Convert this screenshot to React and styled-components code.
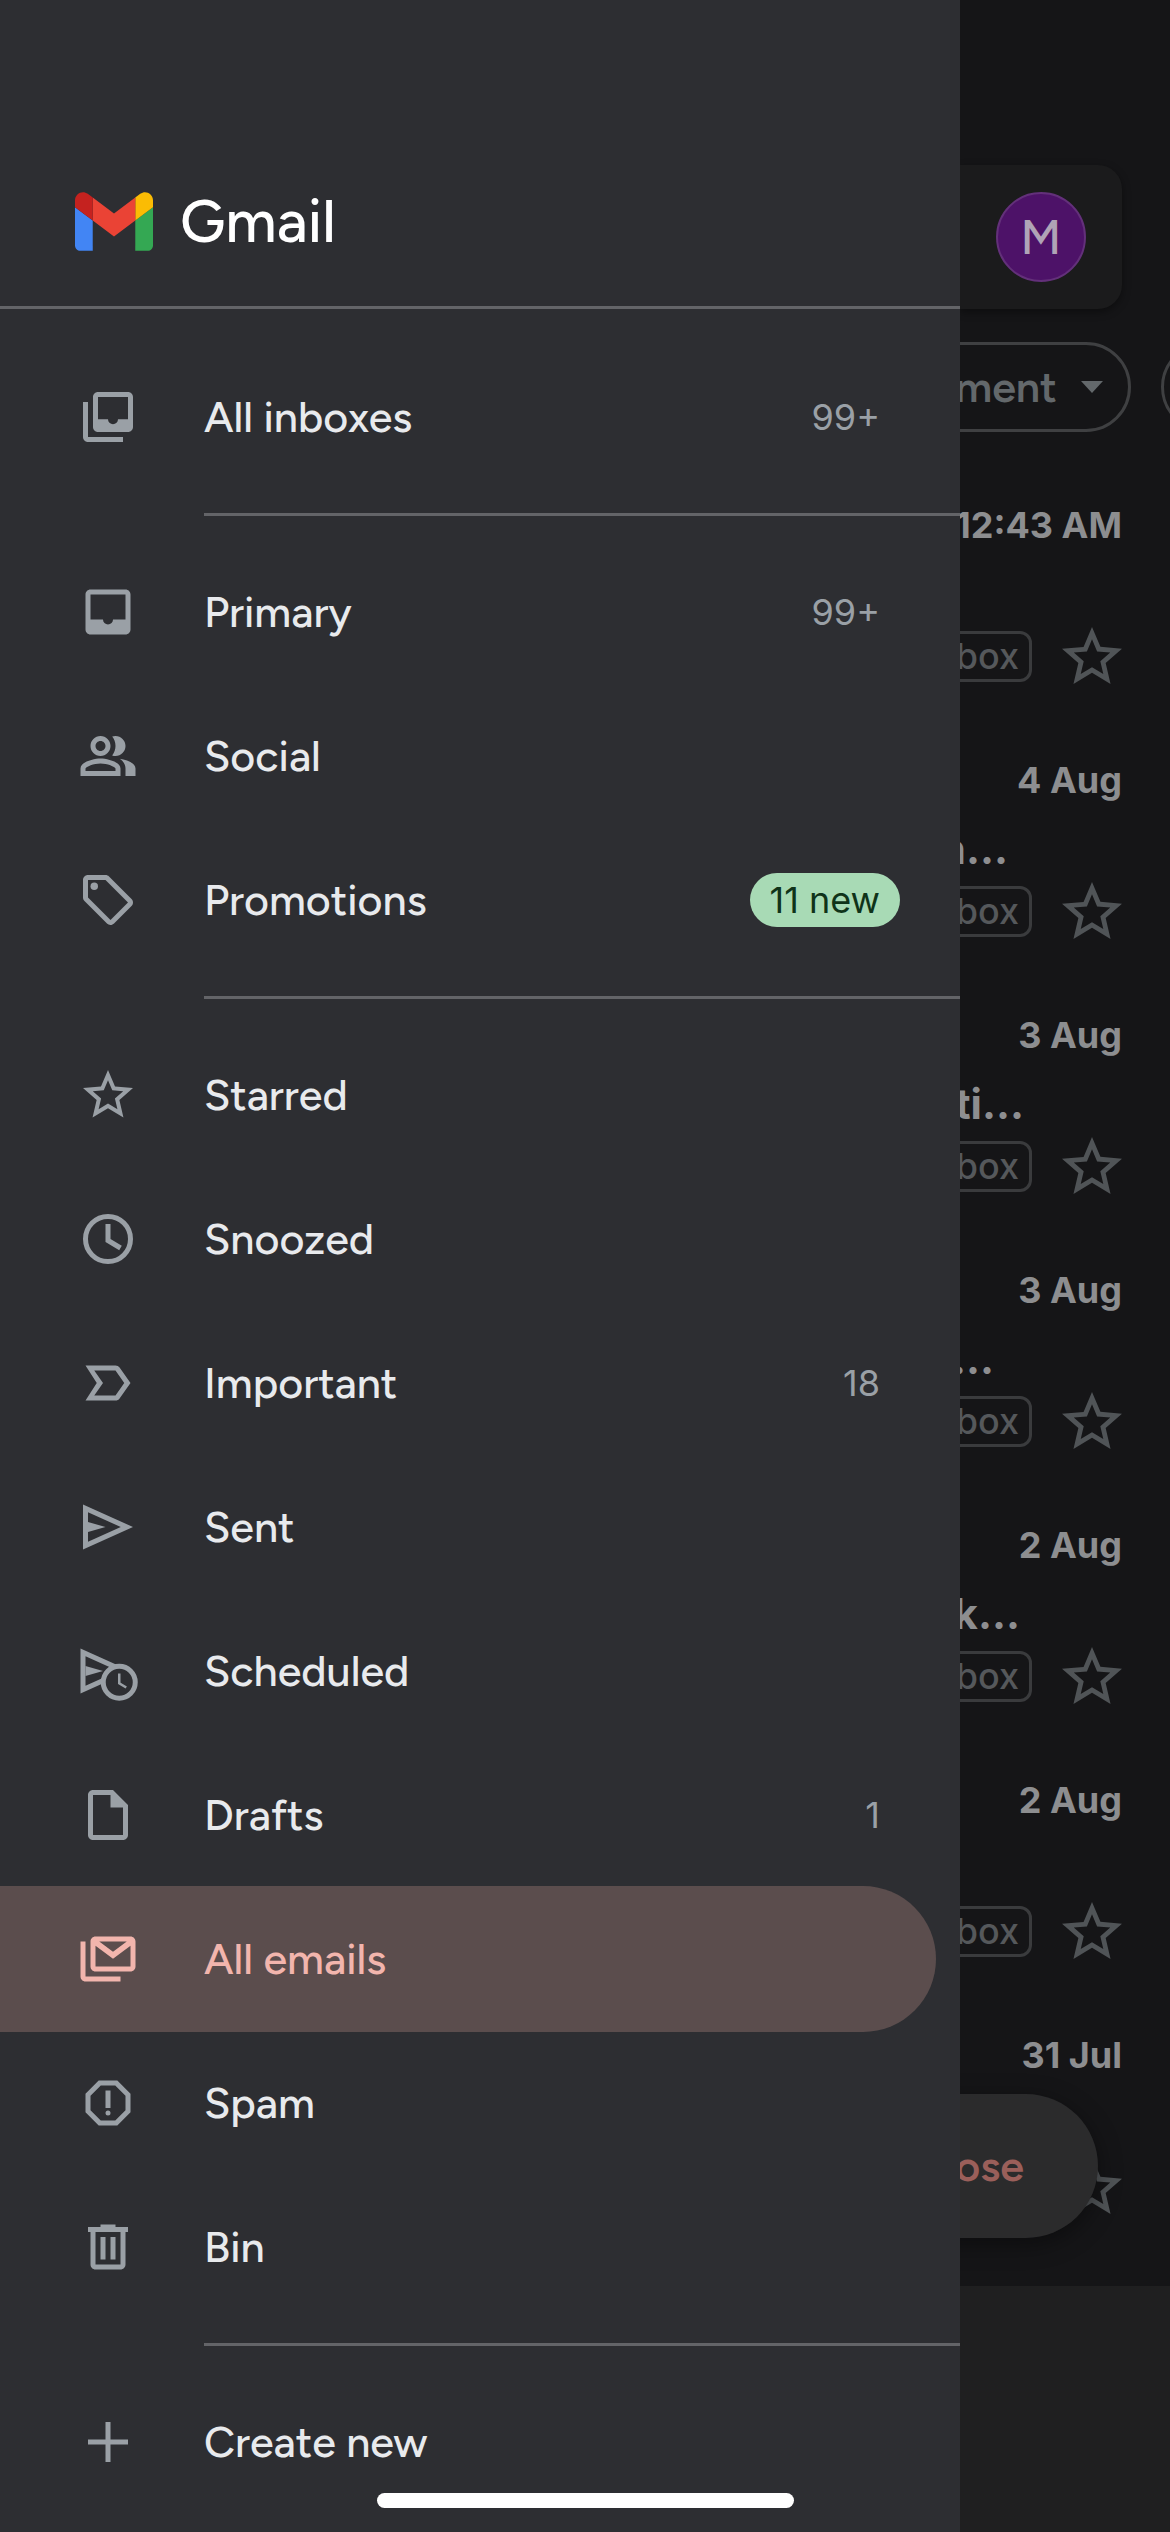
import React from "react";
import styled, { createGlobalStyle, css } from "styled-components";

const color = {
  drawer: "#2d2e32",
  line: "#636468",
  icon: "#9aa0a6",
  text: "#e8eaed",
  active: "#f2b5ad",
  activeBg: "#5b4d4d",
};

const brandFont = `Figtree, Lato, "Open Sans", sans-serif`;
const bodyFont = `Inter, Roboto, "Liberation Sans", sans-serif`;

const GlobalStyle = createGlobalStyle`
  *, *::before, *::after { box-sizing: border-box; }
  body { margin: 0; background: #151517; font-family: ${bodyFont}; }
  button { border: 0; padding: 0; background: none; font: inherit; color: inherit; }
`;

const Screen = styled.div`
  position: relative;
  display: grid;
  grid-template-columns: minmax(0, 1fr) 210px;
  min-height: 100vh;
`;

/* Drawer */

const Drawer = styled.aside`
  display: flex;
  flex-direction: column;
  background: ${color.drawer};
  color: ${color.text};
  font-family: ${brandFont};
`;

const Brand = styled.header`
  display: flex;
  align-items: center;
  gap: 27px;
  padding: 186px 75px 50px;
  border-bottom: 3px solid ${color.line};
`;

const Logo = styled.svg`
  width: 78px;
  height: 59px;
`;

const BrandName = styled.h1`
  margin: 0;
  font-size: 60px;
  line-height: 70px;
  font-weight: 500;
  color: #fff;
`;

const Nav = styled.nav`
  padding: 36px 0 18px;
`;

const Group = styled.ul`
  list-style: none;
  margin: 0;
  padding: 0;

  & + &::before {
    content: "";
    display: block;
    height: 3px;
    margin: 24px 0 24px 204px;
    background: ${color.line};
  }
`;

const Folder = styled.a`
  display: flex;
  align-items: center;
  gap: 66px;
  height: 144px;
  padding: 0 60px 0 78px;
  font-size: 43px;
  font-weight: 500;
  color: inherit;
  text-decoration: none;

  ${(p) =>
    p.$active &&
    css`
      height: 146px;
      margin: -1px 24px -1px 0;
      padding-right: 36px;
      border-radius: 0 73px 73px 0;
      background: ${color.activeBg};
      color: ${color.active};
    `}
`;

const FolderIcon = styled.svg`
  flex: none;
  width: 60px;
  height: 60px;
  fill: ${(p) => (p.$active ? color.active : color.icon)};
  stroke: none;
`;

const FolderName = styled.span`
  flex: 1;
  line-height: 54px;
`;

const Count = styled.span`
  padding: 0 20px;
  font-family: ${bodyFont};
  font-size: 36px;
  line-height: 54px;
  font-weight: 400;
  color: ${color.icon};
`;

const NewBadge = styled(Count)`
  border-radius: 28px;
  background: #a8dab5;
  color: #0f3319;
`;

/* Inbox visible beside the drawer */

const Inbox = styled.main`
  position: relative;
  display: flex;
  flex-direction: column;
  min-width: 0;
  overflow: hidden;
  padding-top: 165px;
  background: #151517;
`;

const SearchBar = styled.div`
  display: flex;
  align-items: center;
  justify-content: flex-end;
  height: 144px;
  margin-right: 48px;
  padding-right: 36px;
  border-radius: 0 24px 24px 0;
  background: #1b1b1c;
  box-shadow: 0 3px 9px rgba(0, 0, 0, 0.4);
`;

const Avatar = styled.button`
  width: 90px;
  height: 90px;
  border: 2px solid #63307a;
  border-radius: 50%;
  background: #4d1268;
  color: #b0a4b6;
  font-family: ${brandFont};
  font-size: 48px;
  line-height: 84px;
  font-weight: 500;
`;

const Filters = styled.div`
  display: flex;
  justify-content: flex-end;
  gap: 30px;
  margin: 33px -81px 69px 0;
`;

const Chip = styled.button`
  display: flex;
  flex: none;
  align-items: center;
  justify-content: flex-end;
  gap: 24px;
  width: ${(p) => p.$width}px;
  height: 90px;
  padding: 0 25px;
  border: 3px solid #3f4042;
  border-radius: 45px;
  color: #63686b;
  font-family: ${brandFont};
  font-size: 43px;
  font-weight: 600;
`;

const Caret = styled.svg`
  width: 22px;
  height: 12px;
  fill: #63686b;
`;

const Mails = styled.ul`
  flex: 1;
  list-style: none;
  margin: 0;
  padding: 0;
`;

const Mail = styled.li`
  display: flex;
  flex-direction: column;
  height: 255px;
  padding-right: 48px;
  color: #8d8e90;
  white-space: nowrap;
`;

const MailDate = styled.time`
  display: flex;
  justify-content: flex-end;
  font-size: 36px;
  line-height: 48px;
  font-weight: 700;
`;

const Subject = styled.span`
  display: flex;
  justify-content: flex-end;
  width: ${(p) => p.$width}px;
  height: 48px;
  margin-top: 21px;
  font-size: 42px;
  line-height: 48px;
  font-weight: 700;
`;

const MailFooter = styled.div`
  display: flex;
  align-items: center;
  justify-content: flex-end;
  gap: 24px;
  height: 51px;
  margin: 13px -6px 0 0;
`;

const FolderTag = styled.span`
  padding: 0 10px;
  border: 3px solid #3a3b3d;
  border-radius: 12px;
  color: #55585b;
  font-size: 36px;
  line-height: 45px;
  font-weight: 500;
`;

const StarButton = styled.button`
  display: flex;
  flex: none;
`;

const StarIcon = styled.svg`
  width: 72px;
  height: 72px;
  fill: #505457;
`;

const BottomBar = styled.footer`
  height: 246px;
  background: #1f1f20;
`;

const Compose = styled.button`
  position: absolute;
  right: 72px;
  bottom: 294px;
  height: 144px;
  padding: 0 74px 0 60px;
  border-radius: 72px;
  background: #2b2b2c;
  box-shadow: 0 6px 24px rgba(0, 0, 0, 0.4);
  color: #9a5f5a;
  font-family: ${brandFont};
  font-size: 43px;
  font-weight: 600;
`;

const HomeIndicator = styled.div`
  position: absolute;
  bottom: 24px;
  left: 50%;
  width: 417px;
  height: 15px;
  margin-left: -208px;
  border-radius: 8px;
  background: #fff;
`;

const starPath =
  "M22 9.24l-7.19-.62L12 2 9.19 8.63 2 9.24l5.46 4.73L5.82 21 12 17.27 18.18 21l-1.63-7.03L22 9.24zM12 15.4l-3.76 2.27 1-4.28-3.32-2.88 4.38-.38L12 6.1l1.71 4.04 4.38.38-3.32 2.88 1 4.28L12 15.4z";

const icons = {
  inboxes: (
    <path d="M20 2H8c-1.1 0-2 .9-2 2v12c0 1.1.9 2 2 2h12c1.1 0 2-.9 2-2V4c0-1.1-.9-2-2-2zm0 10.9h-4a2 2 0 0 1-4 0H8V4h12v8.9zM4 6H2v14c0 1.1.9 2 2 2h14v-2H4V6z" />
  ),
  inbox: (
    <path d="M19 3H5c-1.1 0-2 .9-2 2v14c0 1.1.9 2 2 2h14c1.1 0 2-.9 2-2V5c0-1.1-.9-2-2-2zm0 12h-5a2 2 0 0 1-4 0H5V5h14v10z" />
  ),
  people: (
    <path d="M16.67 13.13C18.04 14.06 19 15.32 19 17v3h4v-3c0-2.18-3.57-3.47-6.33-3.87zM9 12c2.21 0 4-1.79 4-4s-1.79-4-4-4-4 1.79-4 4 1.79 4 4 4zm0-6c1.1 0 2 .9 2 2s-.9 2-2 2-2-.9-2-2 .9-2 2-2zM15 12c2.21 0 4-1.79 4-4s-1.79-4-4-4c-.47 0-.91.1-1.33.24C14.5 5.27 15 6.58 15 8s-.5 2.73-1.33 3.76c.42.14.86.24 1.33.24zM9 13c-2.67 0-8 1.34-8 4v3h16v-3c0-2.66-5.33-4-8-4zm6 5H3v-.99C3.2 16.29 6.3 15 9 15s5.8 1.29 6 2v1z" />
  ),
  tag: (
    <>
      <path d="M21.41 11.58l-9-9C12.05 2.22 11.55 2 11 2H4c-1.1 0-2 .9-2 2v7c0 .55.22 1.05.59 1.42l9 9c.36.36.86.58 1.41.58s1.05-.22 1.41-.59l7-7c.37-.36.59-.86.59-1.41s-.23-1.06-.59-1.42zM13 20.01L4 11V4h7l9 9-7 7.01z" />
      <circle cx="6.5" cy="6.5" r="1.5" />
    </>
  ),
  star: <path d={starPath} />,
  clock: (
    <g fill="none" stroke={color.icon} strokeWidth="2">
      <circle cx="12" cy="12" r="9" />
      <path d="M12 6v6.6l5 3" />
    </g>
  ),
  important: (
    <path d="M15 19H3l4.5-7L3 5h12c.65 0 1.26.31 1.63.84L21 12l-4.37 6.16c-.37.52-.98.84-1.63.84zm-8.5-2H15l3.5-5L15 7H6.5l3.5 5-3.5 5z" />
  ),
  sent: (
    <>
      <path fillRule="evenodd" d="M2 3l20 9-20 9V3zm2 3.1v11.8L17.1 12 4 6.1z" />
      <path d="M4 10l7 2-7 2z" />
    </>
  ),
  scheduled: (
    <>
      <path fillRule="evenodd" d="M1 3l20 9-20 9V3zm2 3.1v11.8L16.1 12 3 6.1z" />
      <path d="M3 10l7 2-7 2z" />
      <circle cx="16.5" cy="16.5" r="6.4" fill={color.drawer} stroke={color.icon} strokeWidth="2" />
      <path d="M16.5 13v3.9l2.8 1.7" fill="none" stroke={color.icon} />
    </>
  ),
  file: (
    <path d="M14 2H6c-1.1 0-2 .9-2 2v16c0 1.1.9 2 2 2h12c1.1 0 2-.9 2-2V8l-6-6zM6 20V4h7v5h5v11H6z" />
  ),
  mails: (
    <>
      <path
        fillRule="evenodd"
        d="M21 3H7c-1.1 0-2 .9-2 2v10c0 1.1.9 2 2 2h14c1.1 0 2-.9 2-2V5c0-1.1-.9-2-2-2zM8.5 5h11L14 9.1 8.5 5zM7 15V6.7l7 5.2 7-5.2V15H7z"
      />
      <path d="M3 5H1v14c0 1.1.9 2 2 2h14v-2H3V5z" />
    </>
  ),
  spam: (
    <>
      <path d="M15.73 3H8.27L3 8.27v7.46L8.27 21h7.46L21 15.73V8.27L15.73 3zM19 14.9L14.9 19H9.1L5 14.9V9.1L9.1 5h5.8L19 9.1v5.8z" />
      <circle cx="12" cy="16" r="1" />
      <path d="M11 7h2v7h-2z" />
    </>
  ),
  bin: (
    <path
      fillRule="evenodd"
      d="M9 3h6v1h5v2h-1v13c0 1.1-.9 2-2 2H7c-1.1 0-2-.9-2-2V6H4V4h5V3zM7 6v13h10V6H7zm2 2h2v9H9V8zm4 0h2v9h-2V8z"
    />
  ),
  plus: <path d="M11 4h2v7h7v2h-7v7h-2v-7H4v-2h7z" />,
};

const groups = [
  [{ name: "All inboxes", icon: "inboxes", count: "99+" }],
  [
    { name: "Primary", icon: "inbox", count: "99+" },
    { name: "Social", icon: "people" },
    { name: "Promotions", icon: "tag", fresh: "11 new" },
  ],
  [
    { name: "Starred", icon: "star" },
    { name: "Snoozed", icon: "clock" },
    { name: "Important", icon: "important", count: "18" },
    { name: "Sent", icon: "sent" },
    { name: "Scheduled", icon: "scheduled" },
    { name: "Drafts", icon: "file", count: "1" },
    { name: "All emails", icon: "mails", active: true },
    { name: "Spam", icon: "spam" },
    { name: "Bin", icon: "bin" },
  ],
  [{ name: "Create new", icon: "plus" }],
];

const mails = [
  { date: "12:43 AM" },
  { date: "4 Aug", subject: "n...", width: 48 },
  { date: "3 Aug", subject: "ti...", width: 64 },
  { date: "3 Aug", subject: "...", width: 34 },
  { date: "2 Aug", subject: "k...", width: 60 },
  { date: "2 Aug" },
  { date: "31 Jul" },
];

function FolderLink({ item }) {
  return (
    <li>
      <Folder href="#" $active={item.active} aria-current={item.active ? "page" : undefined}>
        <FolderIcon viewBox="0 0 24 24" $active={item.active} aria-hidden="true">
          {icons[item.icon]}
        </FolderIcon>
        <FolderName>{item.name}</FolderName>
        {item.count && <Count>{item.count}</Count>}
        {item.fresh && <NewBadge>{item.fresh}</NewBadge>}
      </Folder>
    </li>
  );
}

export default function App() {
  return (
    <>
      <GlobalStyle />
      <Screen>
        <Drawer>
          <Brand>
            <Logo viewBox="52 42 88 66" aria-hidden="true">
              <path fill="#4285f4" d="M58 108h14V74L52 59v43c0 3.32 2.69 6 6 6" />
              <path fill="#34a853" d="M120 108h14c3.32 0 6-2.69 6-6V59l-20 15" />
              <path fill="#fbbc04" d="M120 48v26l20-15v-8c0-7.42-8.47-11.65-14.4-7.2" />
              <path fill="#ea4335" d="M72 74V48l24 18 24-18v26L96 92" />
              <path fill="#c5221f" d="M52 51v8l20 15V48l-5.6-4.2c-5.94-4.45-14.4-.22-14.4 7.2" />
            </Logo>
            <BrandName>Gmail</BrandName>
          </Brand>
          <Nav aria-label="Mail folders">
            {groups.map((group) => (
              <Group key={group[0].name}>
                {group.map((item) => (
                  <FolderLink key={item.name} item={item} />
                ))}
              </Group>
            ))}
          </Nav>
        </Drawer>

        <Inbox>
          <SearchBar>
            <Avatar aria-label="Account">M</Avatar>
          </SearchBar>
          <Filters>
            <Chip $width={340}>
              Attachment
              <Caret viewBox="0 0 22 12" aria-hidden="true">
                <path d="M0 0h22L11 12z" />
              </Caret>
            </Chip>
            <Chip $width={90} aria-label="More filters" />
          </Filters>
          <Mails>
            {mails.map((mail, i) => (
              <Mail key={i}>
                <MailDate>{mail.date}</MailDate>
                <Subject $width={mail.width}>{mail.subject}</Subject>
                <MailFooter>
                  <FolderTag>Inbox</FolderTag>
                  <StarButton aria-label="Star">
                    <StarIcon viewBox="0 0 24 24">
                      <path d={starPath} />
                    </StarIcon>
                  </StarButton>
                </MailFooter>
              </Mail>
            ))}
          </Mails>
          <BottomBar />
          <Compose>Compose</Compose>
        </Inbox>
        <HomeIndicator />
      </Screen>
    </>
  );
}
